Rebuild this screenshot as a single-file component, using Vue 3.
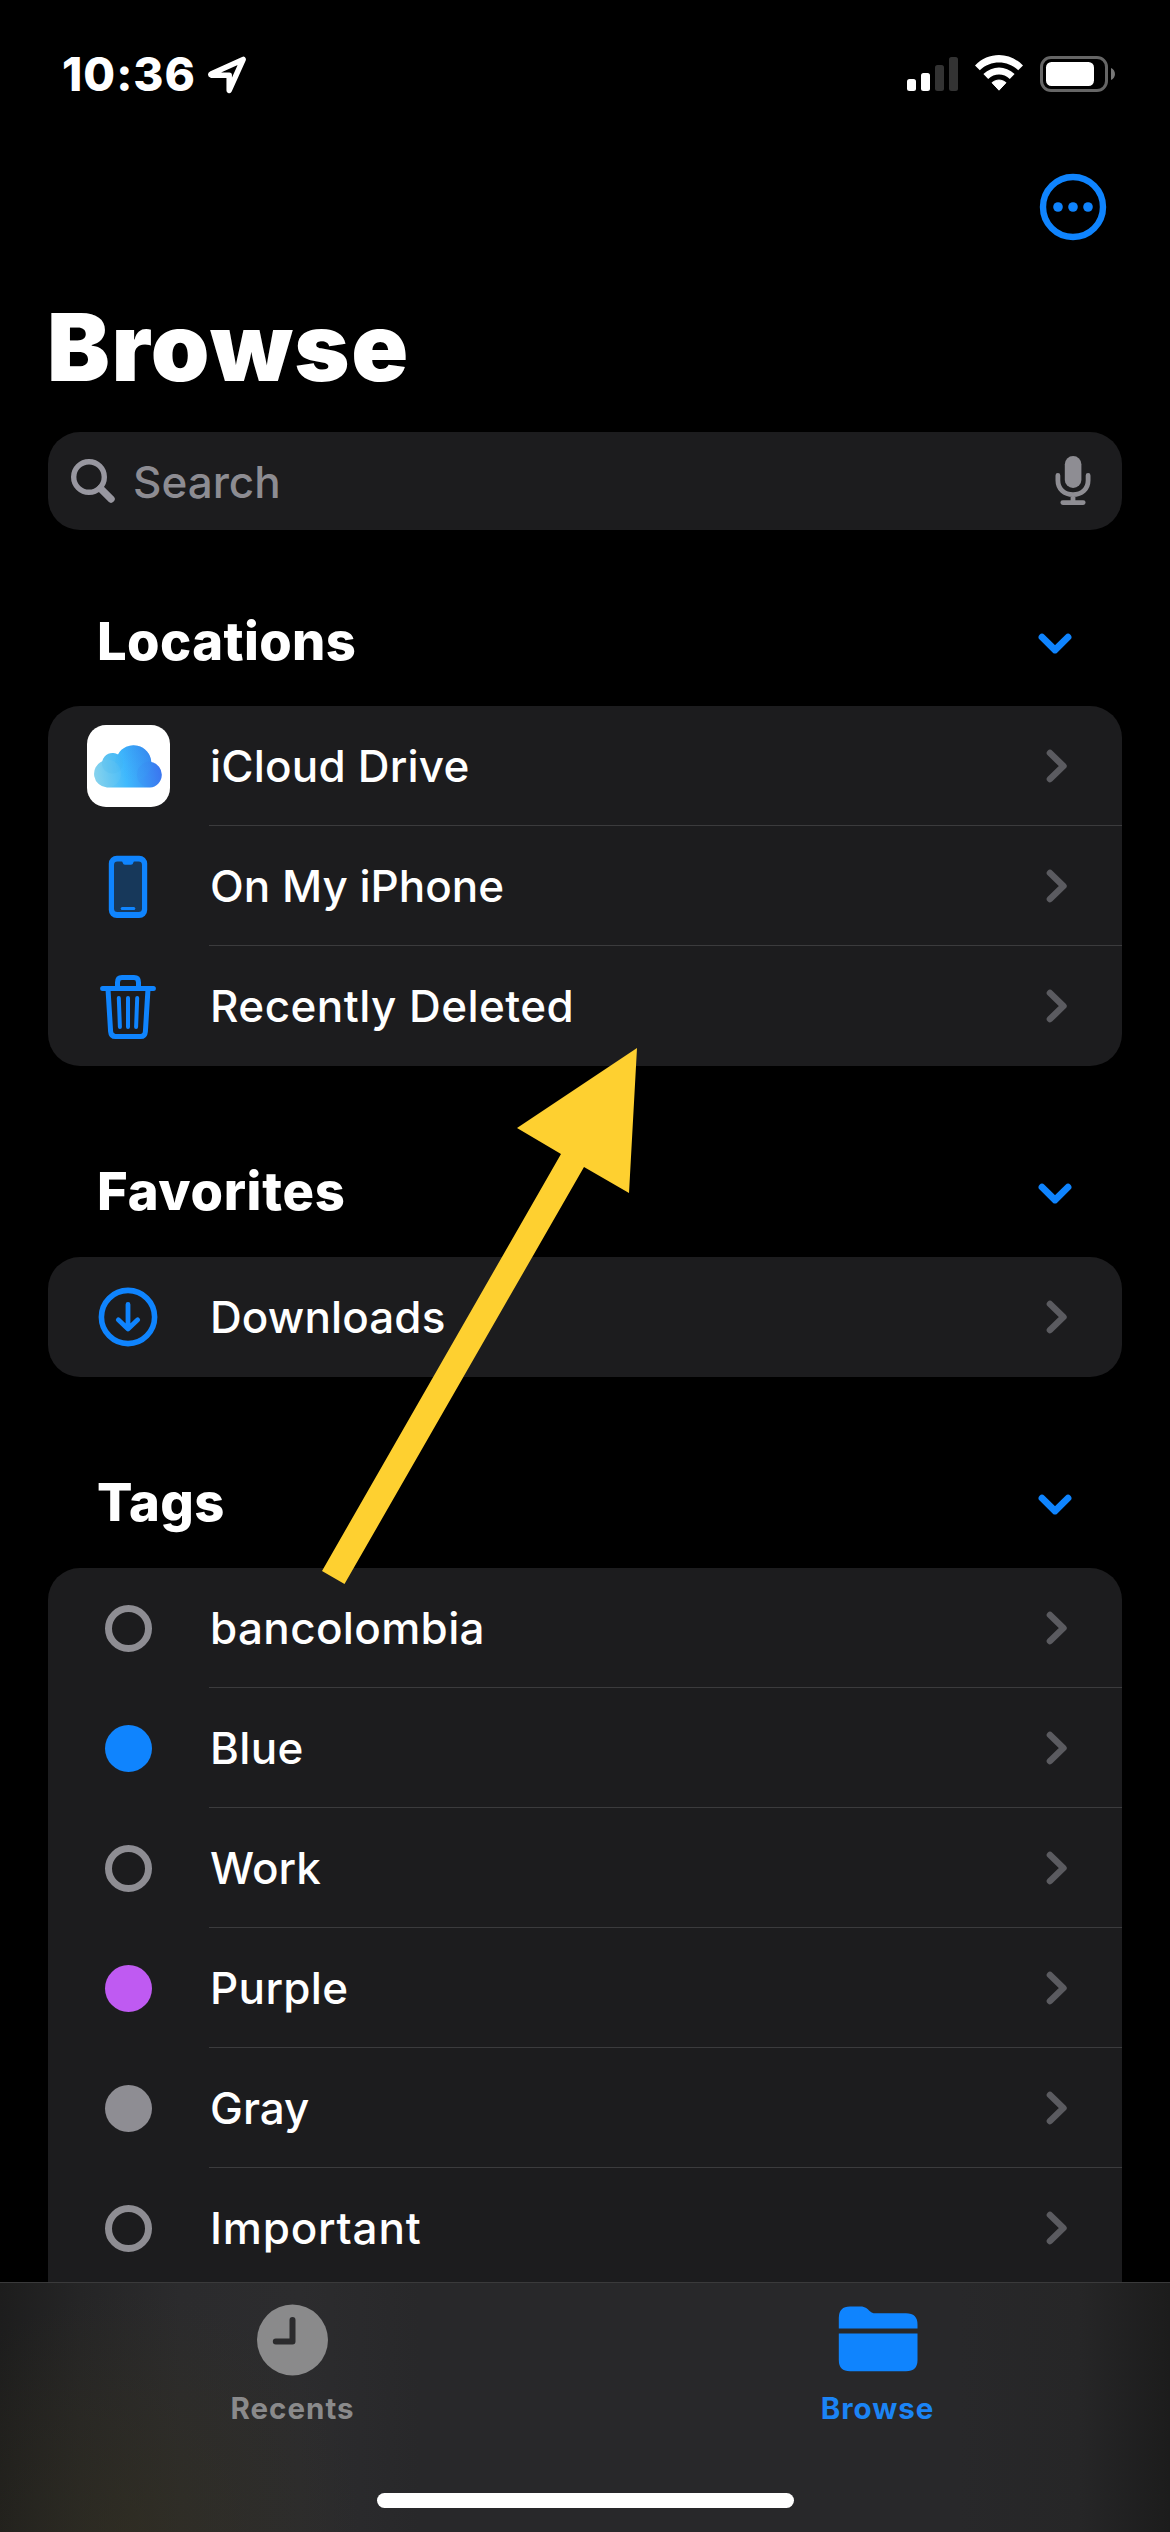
<script setup>
const sections = [
  {
    title: 'Locations',
    cls: 'locations',
    items: [
      { label: 'iCloud Drive', icon: 'cloud', cls: 'w-icloud' },
      { label: 'On My iPhone', icon: 'phone', cls: 'w-phone' },
      { label: 'Recently Deleted', icon: 'trash', cls: 'w-trash' },
    ],
  },
  {
    title: 'Favorites',
    cls: 'favorites',
    items: [{ label: 'Downloads', icon: 'download', cls: 'w-downloads' }],
  },
  {
    title: 'Tags',
    cls: 'tags',
    items: [
      { label: 'bancolombia', icon: 'ring', cls: 'w-banco' },
      { label: 'Blue', icon: 'dot blue', cls: 'w-blue' },
      { label: 'Work', icon: 'ring', cls: 'w-work' },
      { label: 'Purple', icon: 'dot purple', cls: 'w-purple' },
      { label: 'Gray', icon: 'dot gray', cls: 'w-gray' },
      { label: 'Important', icon: 'ring', cls: 'w-important' },
    ],
  },
]
</script>

<template>
  <div class="screen">
    <main class="content">
      <header class="status">
        <div class="clock">
          <span class="time">10:36</span>
          <svg class="loc" width="40" height="40" viewBox="0 0 40 40">
            <path d="M4.6 18.7 36.2 4.4 22.2 35.400V20.300H4.600Q2.800 19.600 4.600 18.700Z" fill="none" stroke="#fff" stroke-width="5.500" stroke-linejoin="round" />
          </svg>
        </div>
        <div class="indicators">
          <svg width="51" height="36" viewBox="0 0 51 36">
            <rect x="0" y="23" width="9" height="12" rx="2.5" fill="#fff" />
            <rect x="14" y="17" width="9" height="18" rx="2.5" fill="#fff" />
            <rect x="28" y="9" width="9" height="26" rx="2.5" fill="#333" />
            <rect x="42" y="1" width="9" height="34" rx="2.5" fill="#333" />
          </svg>
          <svg class="wifi" width="48" height="36" viewBox="0 0 48 36">
            <path d="M0 10.4C13.5-3.4 34.5-3.4 48 10.4L43.2 15.2C32.5 4.9 15.5 4.9 4.8 15.2Z" fill="#fff" />
            <path d="M8.4 19C17.5 10.3 30.5 10.3 39.6 19L34.8 23.9C28.5 18 19.5 18 13.2 23.9Z" fill="#fff" />
            <path d="M17 27.7C21.2 24.2 26.8 24.2 31 27.7L24 35.2Z" fill="#fff" stroke="#fff" stroke-linejoin="round" />
          </svg>
          <svg class="battery" width="76" height="36" viewBox="0 0 76 36">
            <rect x="1.5" y="1.5" width="65" height="33" rx="9.5" fill="none" stroke="#666" stroke-width="3" />
            <rect x="6" y="6" width="48" height="24" rx="5.5" fill="#fff" />
            <path d="M71 12C76.3 14 76.3 22 71 24Z" fill="#777" />
          </svg>
        </div>
      </header>

      <nav class="toolbar">
        <svg width="68" height="68" viewBox="0 0 68 68">
          <circle cx="34" cy="34" r="30" fill="none" stroke="#0f84fe" stroke-width="6.4" />
          <g fill="#0f84fe">
            <circle cx="19" cy="34" r="4.8" /><circle cx="34" cy="34" r="4.8" /><circle cx="49" cy="34" r="4.8" />
          </g>
        </svg>
      </nav>

      <h1>Browse</h1>

      <div class="search">
        <svg width="46" height="46" viewBox="0 0 46 46" fill="none" stroke="#9897a0">
          <circle cx="19" cy="19" r="15.3" stroke-width="5.4" />
          <path d="M30.5 30.5 41 41" stroke-width="7.4" stroke-linecap="round" />
        </svg>
        <span class="placeholder">Search</span>
        <svg class="mic" width="36" height="50" viewBox="0 0 36 50">
          <rect x="9.8" y="0" width="16.6" height="32" rx="8.3" fill="#8e8d93" />
          <path d="M2.9 19.5V24.5C2.9 33 9.3 38.6 18 38.6S33.1 33 33.1 24.5V19.5M18 39V46M7.8 46.6H28.2" fill="none" stroke="#8e8d93" stroke-width="4.8" stroke-linecap="round" />
        </svg>
      </div>

      <section v-for="s in sections" :key="s.title" :class="s.cls">
        <div class="heading">
          <h2>{{ s.title }}</h2>
          <svg width="34" height="22" viewBox="0 0 34 22">
            <path d="M4 4.2 17 17 30 4.2" fill="none" stroke="#0f84fe" stroke-width="6.8" stroke-linecap="round" stroke-linejoin="round" />
          </svg>
        </div>
        <div class="card">
          <div v-for="i in s.items" :key="i.label" class="row">
            <div class="icon">
              <div v-if="i.icon === 'cloud'" class="app-icon">
                <svg width="70" height="44" viewBox="0 0 70 44">
                  <defs>
                    <linearGradient id="cloudFill" x1="0" y1=".6" x2="1" y2=".5">
                      <stop offset="0" stop-color="#86d3ee" />
                      <stop offset=".22" stop-color="#62c6f3" />
                      <stop offset=".45" stop-color="#3fb9fd" />
                      <stop offset=".72" stop-color="#3a98f6" />
                      <stop offset="1" stop-color="#3b72ef" />
                    </linearGradient>
                    <linearGradient id="puff" x1="0" y1="1" x2="1" y2="0">
                      <stop offset="0" stop-color="#3fbcff" stop-opacity="0" />
                      <stop offset="1" stop-color="#2f86e8" stop-opacity=".5" />
                    </linearGradient>
                    <clipPath id="cloudClip">
                      <path d="M14 43.6A13.8 13.8 0 0 1 9.3 17.2 10.6 10.6 0 0 1 25 10.4 17.8 17.8 0 0 1 58.3 17.9 13 13 0 0 1 57 43.6Z" />
                    </clipPath>
                  </defs>
                  <g clip-path="url(#cloudClip)">
                    <rect width="70" height="44" fill="url(#cloudFill)" />
                    <circle cx="40.5" cy="18.3" r="18.3" fill="url(#puff)" />
                    <circle cx="19.5" cy="19" r="10.6" fill="#3fb0ef" opacity=".22" />
                    <circle cx="14" cy="29.6" r="14" fill="#9bdcee" opacity=".1" />
                    <circle cx="57" cy="30.6" r="13" fill="#3d6cf0" opacity=".1" />
                  </g>
                </svg>
              </div>
              <svg v-else-if="i.icon === 'phone'" class="nudge" width="40" height="64" viewBox="0 0 40 64">
                <rect x=".8" y=".7" width="38.4" height="62.4" rx="8" fill="#0f84fe" />
                <path d="M9.5 6.6H13.4Q14.6 6.6 14.8 8 15.1 9.8 17 9.8H23Q24.9 9.8 25.2 8 25.4 6.6 26.6 6.6H30.5Q34 6.6 34 10V53.500Q34 57 30.500 57H9.500Q6 57 6 53.500V10Q6 6.600 9.500 6.600Z" fill="#17385a" />
                <path d="M14.200 53.500H25.800" stroke="#0f84fe" stroke-width="3" stroke-linecap="round" />
              </svg>
              <svg v-else-if="i.icon === 'trash'" class="nudge" width="56" height="66" viewBox="0 0 56 66" fill="none" stroke="#0f84fe" stroke-linecap="round" stroke-linejoin="round">
                <path d="M2.600 14.500H53.400M8 15 10.600 57.500Q11 62.600 15.500 62.600H40.500Q45 62.600 45.400 57.500L48 15M17.500 13V8.500Q17.500 3.600 22 3.600H34Q38.500 3.600 38.500 8.500V13" stroke-width="5" />
                <path d="M18.800 24 19.900 53M28 24V53M37.200 24 36.100 53" stroke-width="4" />
              </svg>
              <svg v-else-if="i.icon === 'download'" width="60" height="60" viewBox="0 0 60 60" fill="none" stroke="#0f84fe" stroke-linecap="round" stroke-linejoin="round">
                <circle cx="30" cy="30" r="26.600" stroke-width="5.600" />
                <path d="M30 17.500V41.500M20.300 32.800 30 42 39.700 32.800" stroke-width="4.800" />
              </svg>
              <span v-else :class="i.icon"></span>
            </div>
            <div class="cell">
              <span class="label" :class="i.cls">{{ i.label }}</span>
              <svg width="24" height="36" viewBox="0 0 24 36">
                <path d="M5 5 18.400 18 5 31" fill="none" stroke="#5b5b60" stroke-width="6.600" stroke-linecap="round" stroke-linejoin="round" />
              </svg>
            </div>
          </div>
        </div>
      </section>

      <svg class="pointer" width="320" height="540" viewBox="320 1046 320 540">
        <path d="M637 1048 517 1128 561 1154 322 1571 344.500 1584 584 1167 629 1193Z" fill="#fed030" />
      </svg>
    </main>

    <footer class="tabbar">
      <div class="tabs">
        <div class="tab">
          <svg width="80" height="72" viewBox="0 0 80 72">
            <circle cx="39.500" cy="36" r="35.500" fill="#8a8a8b" />
            <path d="M39.500 16V37.500H22.800" fill="none" stroke="#2b2b2d" stroke-width="6" stroke-linecap="round" stroke-linejoin="round" />
          </svg>
          <span>Recents</span>
        </div>
        <div class="tab active">
          <svg width="80" height="72" viewBox="0 0 80 72" fill="#0f84fe">
            <path d="M.800 24.500V14Q.800 2.500 12 2.500H22.500C27.500 2.500 29.500 5 32 7.300 33.800 8.900 34.500 9.300 37.500 9.300H68Q79.500 9.300 79.500 20.500V24.500Z" />
            <path d="M.800 29.500H79.500V56Q79.500 67.300 68 67.300H12Q.800 67.300 .800 56Z" />
          </svg>
          <span>Browse</span>
        </div>
      </div>
      <div class="home"></div>
    </footer>
  </div>
</template>

<style>
body {
  margin: 0;
  background: #000;
}
</style>

<style scoped>
.screen {
  width: 1170px;
  height: 2532px;
  display: flex;
  flex-direction: column;
  background: #000;
  color: #fff;
  font-family: Inter, "Liberation Sans", sans-serif;
  overflow: hidden;
}
svg {
  display: block;
  flex: none;
}
.content {
  position: relative;
  height: 2282px;
  flex: none;
  overflow: hidden;
}
.status {
  display: flex;
  justify-content: space-between;
  height: 173px;
  padding: 0 54px 0 62px;
  box-sizing: border-box;
}
.clock {
  display: flex;
  padding-top: 44px;
}
.time {
  width: 145px;
  font-size: 46px;
  line-height: 60px;
  font-weight: 800;
  letter-spacing: 1px;
  white-space: nowrap;
}
.loc {
  margin-top: 11px;
}
.indicators {
  display: flex;
  padding-top: 56px;
}
.wifi {
  margin: -1px 17px 0;
}
.toolbar {
  display: flex;
  justify-content: flex-end;
  padding-right: 63px;
}
h1 {
  margin: 46px 0 0 47px;
  font-size: 94px;
  line-height: 120px;
  font-weight: 900;
  letter-spacing: 1.6px;
}
.search {
  display: flex;
  align-items: center;
  height: 98px;
  margin: 25px 48px 0;
  padding: 0 31px 0 22px;
  box-sizing: border-box;
  border-radius: 32px;
  background: #1c1c1e;
}
.placeholder {
  flex: 1;
  margin: 2px 0 0 17px;
  font-size: 44px;
  line-height: 60px;
  font-weight: 500;
  color: #8d8c92;
}
.heading {
  display: flex;
  justify-content: space-between;
  align-items: center;
  height: 80px;
  padding: 0 98px 0 97px;
}
.locations .heading {
  margin-top: 71px;
}
.favorites .heading,
.tags .heading {
  margin-top: 85px;
}
.heading svg {
  margin-top: 5px;
}
h2 {
  margin: 0;
  font-size: 52.500px;
  line-height: 80px;
  font-weight: 800;
  letter-spacing: .4px;
}
.favorites h2 {
  letter-spacing: .7px;
}
.card {
  margin: 25px 48px 0;
  border-radius: 32px;
  background: #1c1c1e;
}
.favorites .card,
.tags .card {
  margin-top: 26px;
}
.tags .card {
  border-radius: 32px 32px 0 0;
}
.row {
  display: flex;
  height: 120px;
}
.icon {
  width: 160px;
  margin-right: 1px;
  flex: none;
  display: flex;
  align-items: center;
  justify-content: center;
}
.nudge {
  margin-top: 2px;
}
.cell {
  flex: 1;
  display: flex;
  align-items: center;
  justify-content: space-between;
  padding: 1px 53px 0 1px;
  box-sizing: border-box;
  border-bottom: 1px solid #3b3b3d;
}
.row:last-child .cell {
  border-bottom-color: transparent;
}
.label {
  font-size: 44px;
  line-height: 118px;
  font-weight: 550;
  white-space: nowrap;
}
.w-icloud {
  letter-spacing: .2px;
}
.w-trash {
  letter-spacing: .45px;
}
.w-downloads {
  letter-spacing: .1px;
}
.w-banco,
.w-blue,
.w-purple {
  letter-spacing: .35px;
}
.w-important {
  letter-spacing: .8px;
}
.app-icon {
  width: 83px;
  height: 82px;
  display: flex;
  align-items: center;
  justify-content: center;
  border-radius: 19px;
  background: #fff;
}
.ring,
.dot {
  width: 47px;
  height: 47px;
  box-sizing: border-box;
  border-radius: 50%;
}
.ring {
  border: 7px solid #8e8d93;
}
.blue {
  background: #0f84fe;
}
.purple {
  background: #bf5af2;
}
.gray {
  background: #8e8d93;
}
.pointer {
  position: absolute;
  left: 320px;
  top: 1046px;
}
.tabbar {
  flex: 1;
  display: flex;
  flex-direction: column;
  align-items: center;
  justify-content: space-between;
  box-sizing: border-box;
  border-top: 1px solid #3a3a3b;
  padding: 21px 0 24px;
  background:
    radial-gradient(ellipse 230px 240px at 130px 100%, rgba(52, 48, 30, .55), transparent),
    linear-gradient(90deg, #1d1d1d 0, #252526 80px, #2b2b2d 180px, #2c2c2e 300px, #28282a 420px, #28282a 960px, #262627 1080px, #1c1c1c 1170px);
}
.tabs {
  display: flex;
  width: 100%;
}
.tab {
  flex: 1;
  display: flex;
  flex-direction: column;
  align-items: center;
  color: #8a8a8b;
  font-size: 29.500px;
  line-height: 40px;
  font-weight: 650;
  letter-spacing: 1px;
}
.tab span {
  margin-top: 12px;
}
.active {
  color: #1b84f5;
}
.home {
  width: 417px;
  height: 15px;
  border-radius: 8px;
  background: #fff;
}
</style>
